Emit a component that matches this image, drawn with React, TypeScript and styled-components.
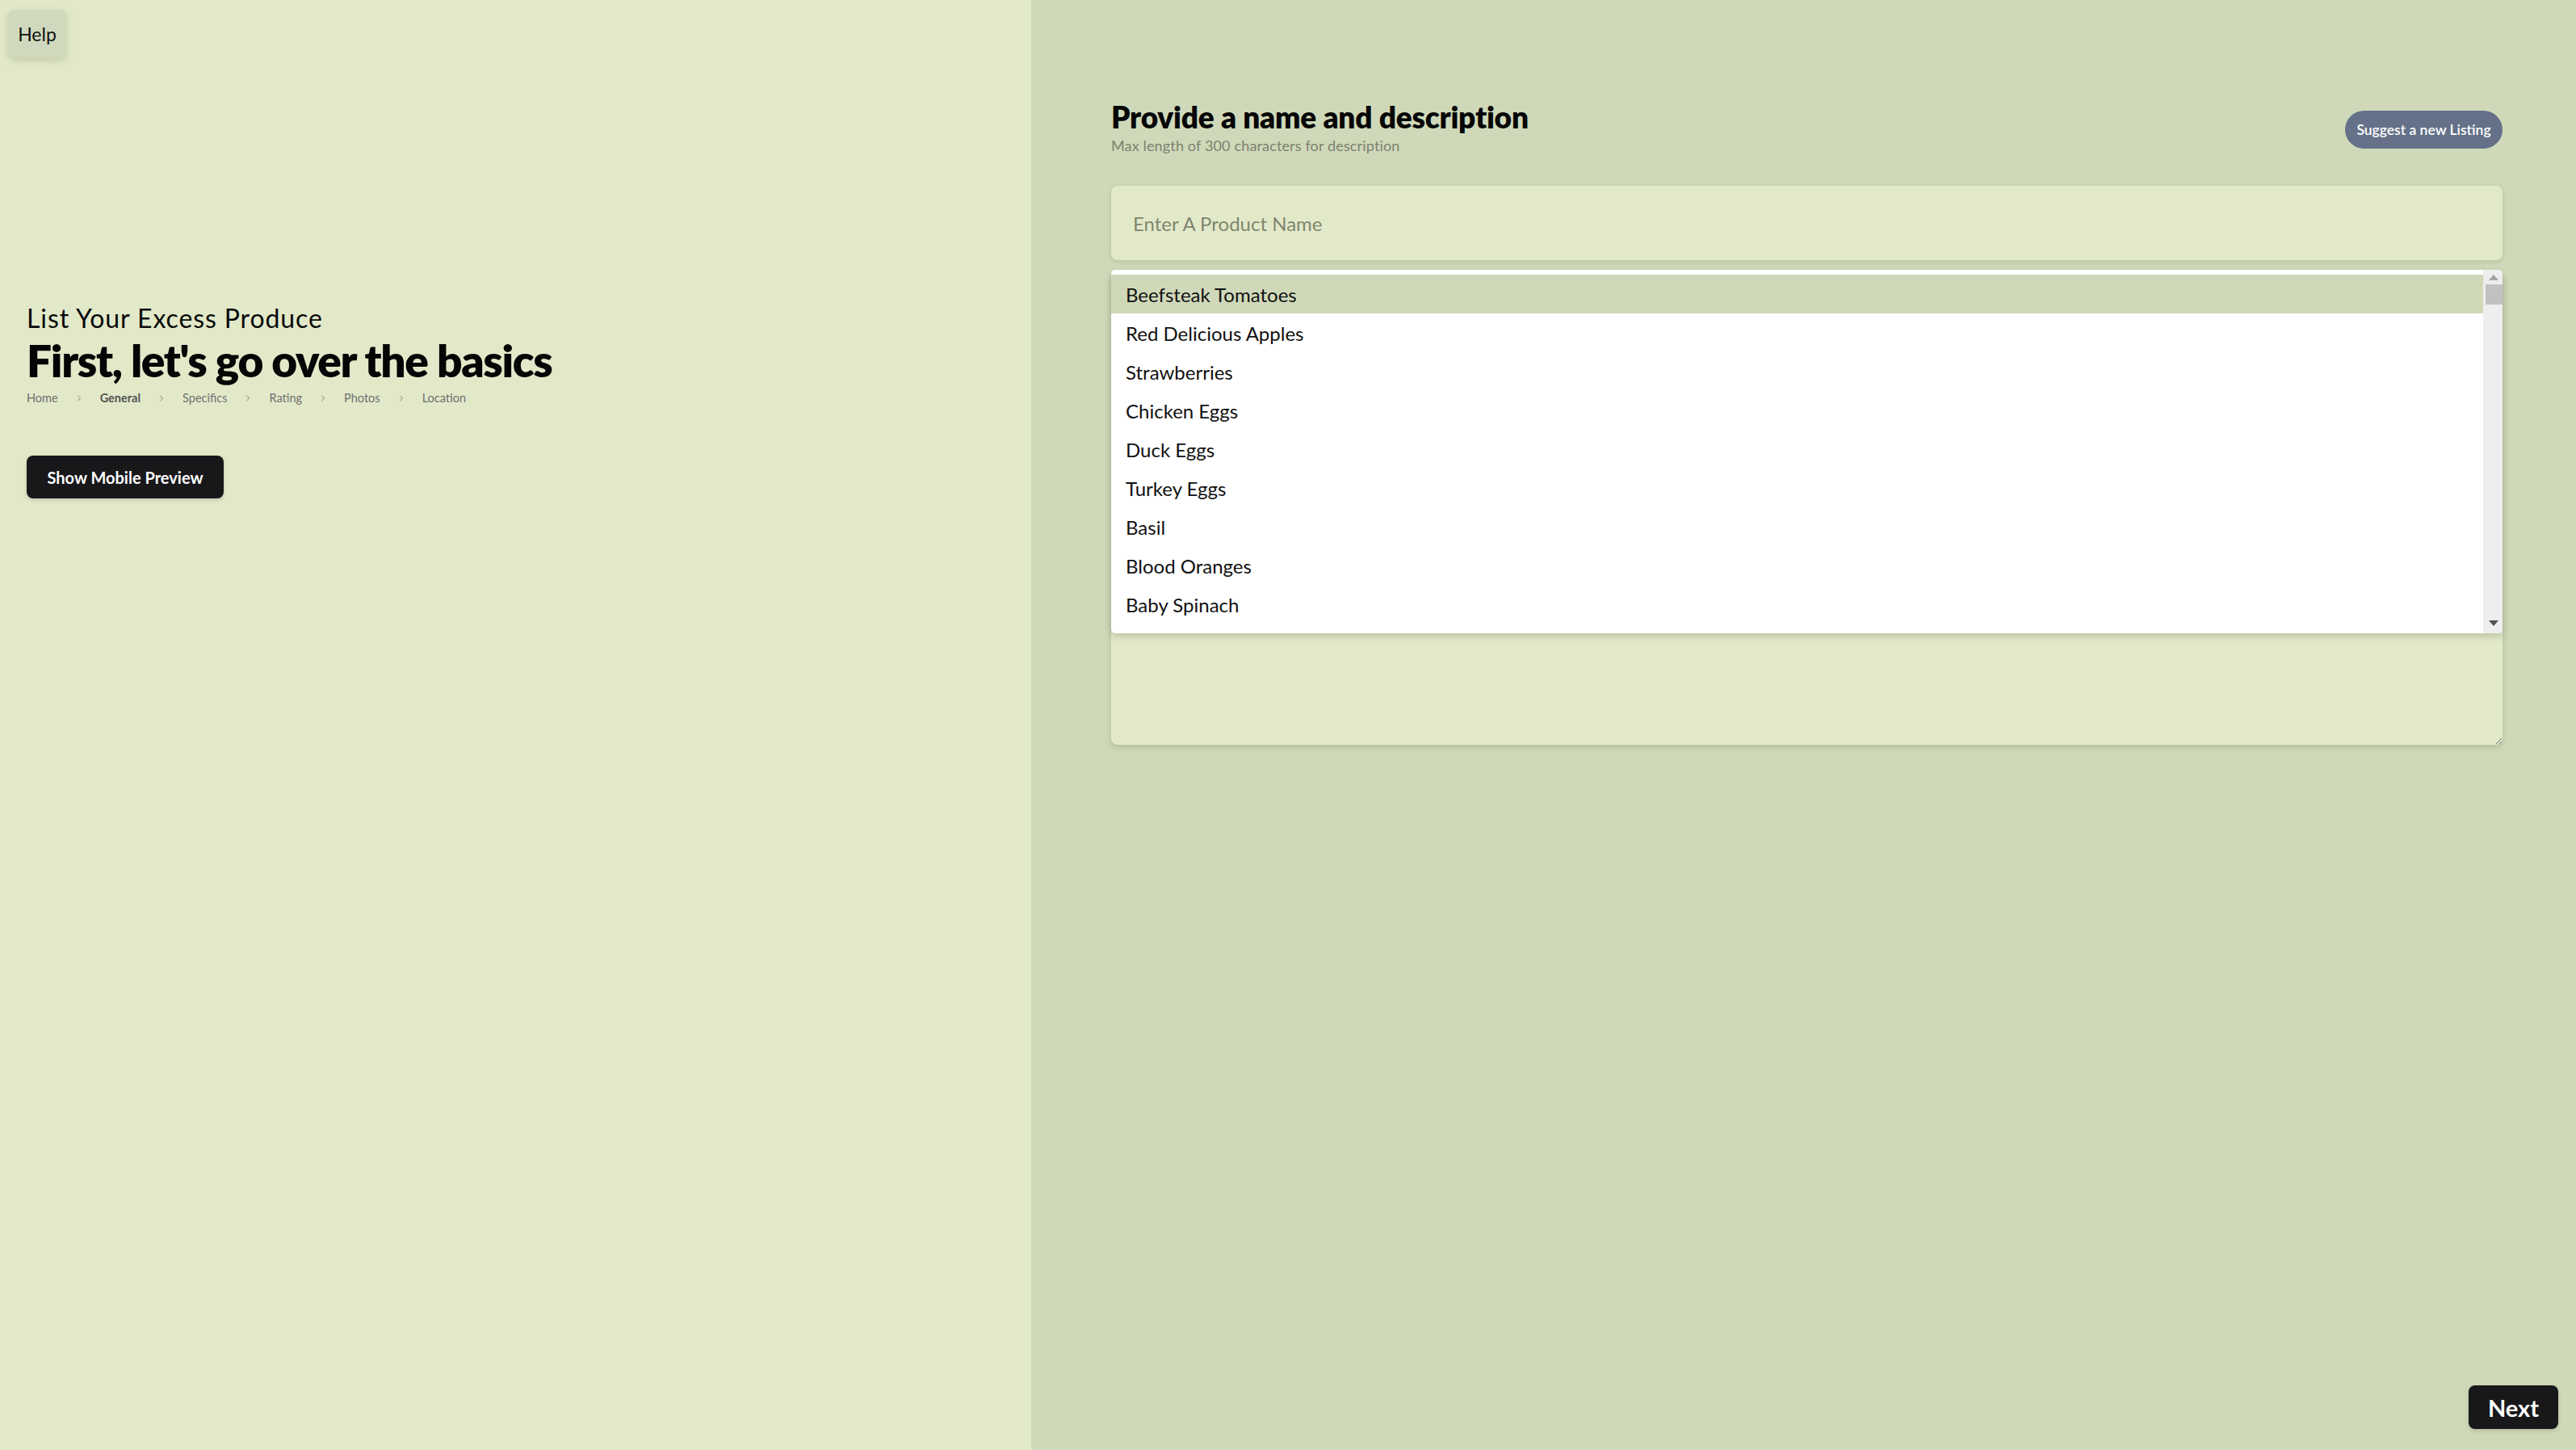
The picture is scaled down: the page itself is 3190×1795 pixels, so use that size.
import React from "react";
import styled, { createGlobalStyle } from "styled-components";
import { ChevronRight } from "lucide-react";

const GlobalStyle = createGlobalStyle`
  * { box-sizing: border-box; }
  html, body { margin: 0; padding: 0; }
  body { font-family: Lato, "Open Sans", sans-serif; color: #0b0b0b; }
`;

const Page = styled.div`
  display: flex;
  width: 3190px;
  height: 1795px;
  overflow: hidden;
`;

const LeftPanel = styled.section`
  width: 1277px;
  flex: none;
  background: #e2e9c9;
  padding: 12px 10px;
  display: flex;
  flex-direction: column;
  align-items: flex-start;
`;

const HelpButton = styled.button`
  width: 72px;
  height: 60px;
  border: none;
  border-radius: 8px;
  background: #d0d9bd;
  box-shadow: 0 3px 8px rgba(60, 70, 40, 0.18);
  font-family: Lato, sans-serif;
  font-size: 23px;
  color: #101010;
  display: flex;
  align-items: center;
  justify-content: center;
  padding: 0;
`;

const Hero = styled.div`
  margin: 305px 0 0 23px;
  display: flex;
  flex-direction: column;
  align-items: flex-start;
`;

const Eyebrow = styled.h2`
  margin: 0;
  font-size: 32px;
  line-height: 34px;
  font-weight: 400;
  color: #0a0a0a;
  letter-spacing: 0.9px;
`;

const Headline = styled.h1`
  margin: 3px 0 0;
  font-size: 55px;
  line-height: 64px;
  font-weight: 800;
  color: #050505;
  letter-spacing: -1.35px;
`;

const Crumbs = styled.nav`
  margin-top: 7px;
  display: flex;
  align-items: center;
  gap: 20px;
  font-size: 14.5px;
  line-height: 16px;
  color: #6f6f6f;
`;

const Crumb = styled.span<{ $active?: boolean }>`
  font-weight: ${(p) => (p.$active ? 700 : 400)};
  color: ${(p) => (p.$active ? "#555" : "#707070")};
`;

const Sep = styled(ChevronRight)`
  color: #666;
  flex: none;
`;

const DarkButton = styled.button<{ $size?: "lg" }>`
  border: none;
  border-radius: 8px;
  background: #18181b;
  color: #ffffff;
  font-family: Lato, sans-serif;
  font-weight: 700;
  box-shadow: 0 2px 5px rgba(0, 0, 0, 0.15);
  display: flex;
  align-items: center;
  justify-content: center;
  padding: 0;
  width: ${(p) => (p.$size === "lg" ? "111px" : "244px")};
  height: ${(p) => (p.$size === "lg" ? "54px" : "53px")};
  font-size: ${(p) => (p.$size === "lg" ? "29px" : "20px")};
`;

const PreviewButton = styled(DarkButton)`
  margin-top: 63px;
`;

const RightPanel = styled.section`
  flex: 1;
  background: #cfd9b9;
  display: flex;
  flex-direction: column;
  padding: 0 22px 26px 0;
`;

const Form = styled.div`
  padding: 123px 69px 0 99px;
  display: flex;
  flex-direction: column;
`;

const HeaderRow = styled.div`
  display: flex;
  justify-content: space-between;
  align-items: flex-start;
`;

const TitleBlock = styled.div`
  display: flex;
  flex-direction: column;
`;

const FormTitle = styled.h2`
  margin: 0;
  font-size: 37px;
  line-height: 44px;
  font-weight: 800;
  color: #060606;
  letter-spacing: -0.2px;
`;

const FormHint = styled.p`
  margin: 3px 0 0;
  font-size: 18px;
  line-height: 20px;
  color: #7b8170;
  letter-spacing: 0.15px;
`;

const PillButton = styled.button`
  margin-top: 14px;
  height: 47px;
  width: 195px;
  border: none;
  border-radius: 24px;
  background: #647189;
  color: #fff;
  font-family: Lato, sans-serif;
  font-size: 17.5px;
  font-weight: 600;
  padding: 0;
`;

const Fields = styled.div`
  position: relative;
  margin-top: 40px;
  display: flex;
  flex-direction: column;
  gap: 16px;
`;

const NameInput = styled.input`
  height: 92px;
  width: 100%;
  border: none;
  outline: none;
  border-radius: 8px;
  background: #e2e9c9;
  box-shadow: 0 2px 6px rgba(70, 80, 50, 0.16);
  padding: 0 27px;
  font-family: Lato, sans-serif;
  font-size: 24px;
  color: #222;
  &::placeholder { color: #80866f; }
`;

const Description = styled.textarea`
  height: 584px;
  width: 100%;
  border: none;
  outline: none;
  border-radius: 8px;
  background: #e2e9c9;
  box-shadow: 0 3px 7px rgba(70, 80, 50, 0.2);
  resize: vertical;
  padding: 20px 27px;
  font-family: Lato, sans-serif;
  font-size: 22px;
`;

const Dropdown = styled.div`
  position: absolute;
  top: 104px;
  left: 0;
  right: 0;
  height: 450px;
  background: #ffffff;
  border-radius: 5px;
  box-shadow: 0 4px 8px rgba(60, 70, 40, 0.22);
  display: flex;
  overflow: hidden;
`;

const Options = styled.ul`
  list-style: none;
  margin: 0;
  padding: 6px 0 0;
  flex: 1;
`;

const Option = styled.li<{ $selected?: boolean }>`
  height: 48px;
  display: flex;
  align-items: center;
  padding: 0 18px;
  font-size: 24px;
  color: #111;
  background: ${(p) => (p.$selected ? "#cfd9b9" : "transparent")};
`;

const Scrollbar = styled.div`
  width: 24px;
  flex: none;
  background: #eeeeee;
  display: flex;
  flex-direction: column;
  align-items: center;
  padding: 6px 0 9px 2px;
`;

const Arrow = styled.svg`
  flex: none;
`;

const Thumb = styled.div`
  width: 21px;
  height: 25px;
  background: #c1c1c1;
  margin-top: 5px;
`;

const Spacer = styled.div`
  flex: 1;
`;

const Footer = styled.div`
  margin-top: auto;
  display: flex;
  justify-content: flex-end;
`;

const produce = [
  "Beefsteak Tomatoes",
  "Red Delicious Apples",
  "Strawberries",
  "Chicken Eggs",
  "Duck Eggs",
  "Turkey Eggs",
  "Basil",
  "Blood Oranges",
  "Baby Spinach",
];

const steps = ["Home", "General", "Specifics", "Rating", "Photos", "Location"];

export default function App() {
  return (
    <>
      <GlobalStyle />
      <Page>
        <LeftPanel>
          <HelpButton>Help</HelpButton>
          <Hero>
            <Eyebrow>List Your Excess Produce</Eyebrow>
            <Headline>First, let's go over the basics</Headline>
            <Crumbs>
              {steps.map((s, i) => (
                <React.Fragment key={s}>
                  {i > 0 && <Sep size={12} strokeWidth={1.6} />}
                  <Crumb $active={s === "General"}>{s}</Crumb>
                </React.Fragment>
              ))}
            </Crumbs>
            <PreviewButton>Show Mobile Preview</PreviewButton>
          </Hero>
        </LeftPanel>
        <RightPanel>
          <Form>
            <HeaderRow>
              <TitleBlock>
                <FormTitle>Provide a name and description</FormTitle>
                <FormHint>Max length of 300 characters for description</FormHint>
              </TitleBlock>
              <PillButton>Suggest a new Listing</PillButton>
            </HeaderRow>
            <Fields>
              <NameInput placeholder="Enter A Product Name" />
              <Description />
              <Dropdown>
                <Options>
                  {produce.map((p, i) => (
                    <Option key={p} $selected={i === 0}>
                      {p}
                    </Option>
                  ))}
                </Options>
                <Scrollbar>
                  <Arrow width="12" height="7" viewBox="0 0 12 7">
                    <path d="M0 7 L6 0 L12 7 Z" fill="#a3a3a3" />
                  </Arrow>
                  <Thumb />
                  <Spacer />
                  <Arrow width="12" height="7" viewBox="0 0 12 7">
                    <path d="M0 0 L6 7 L12 0 Z" fill="#505050" />
                  </Arrow>
                </Scrollbar>
              </Dropdown>
            </Fields>
          </Form>
          <Footer>
            <DarkButton $size="lg">Next</DarkButton>
          </Footer>
        </RightPanel>
      </Page>
    </>
  );
}
